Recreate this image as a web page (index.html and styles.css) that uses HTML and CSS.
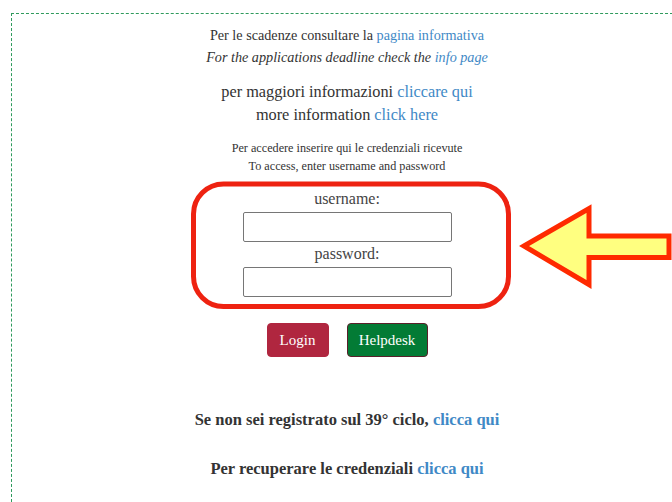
FILE: index.html
```html
<!DOCTYPE html>
<html lang="it">
<head>
<meta charset="utf-8">
<title>Accesso</title>
<link rel="stylesheet" href="styles.css">
</head>
<body>
<div class="frame">
  <p class="notice">Per le scadenze consultare la <a href="#">pagina informativa</a><br>
    <em>For the applications deadline check the <a href="#">info page</a></em></p>
  <p class="more">per maggiori informazioni <a href="#">cliccare qui</a><br>
    more information <a href="#">click here</a></p>
  <p class="access">Per accedere inserire qui le credenziali ricevute<br>
    To access, enter username and password</p>
  <form class="login" onsubmit="return false">
    <label class="field-label" for="user">username:</label>
    <input class="field" id="user" type="text">
    <label class="field-label" for="pass">password:</label>
    <input class="field" id="pass" type="password">
    <div class="actions">
      <button class="btn btn-login" type="submit">Login</button>
      <button class="btn btn-help" type="button">Helpdesk</button>
    </div>
  </form>
  <p class="strong-line first">Se non sei registrato sul 39° ciclo, <a href="#">clicca qui</a></p>
  <p class="strong-line">Per recuperare le credenziali <a href="#">clicca qui</a></p>
</div>

<!-- highlight ring and pointer drawn over the login fields -->
<svg class="markup" width="672" height="502" viewBox="0 0 672 502" aria-hidden="true">
  <rect x="193.5" y="184" width="315" height="122.5" rx="30" ry="30" fill="none" stroke="#ee2211" stroke-width="5"/>
  <polygon points="524,246 589,208.5 589,236 669,236 669,257.5 589,257.5 589,284.5" fill="#ffff80" stroke="#ff2a00" stroke-width="5" stroke-linejoin="miter"/>
</svg>
</body>
</html>
```

FILE: styles.css
```css
html, body {
  margin: 0;
  padding: 0;
  overflow: hidden;
  background: #ffffff;
}

body {
  font-family: "Liberation Serif", "Times New Roman", serif;
  color: #333333;
  position: relative;
  width: 672px;
  height: 502px;
}

a {
  color: #3f89c6;
  text-decoration: none;
}

.frame {
  margin: 13px 0 0 11px;
  width: 672px;
  height: 489px;
  border: 1px dashed #2f9a5c;
  border-bottom: 0;
  padding-top: 10px;
  text-align: center;
  box-sizing: border-box;
}

.frame p {
  margin: 0;
}

.notice {
  font-size: 14.2px;
  line-height: 22px;
}

.more {
  margin-top: 12px !important;
  font-size: 16.3px;
  line-height: 23px;
}

.access {
  margin-top: 13px !important;
  font-size: 12.2px;
  line-height: 18px;
}

.login {
  margin-top: 14px;
  display: flex;
  flex-direction: column;
  align-items: center;
}

.field-label {
  font-size: 16px;
  line-height: 20px;
  color: #444444;
}

.field {
  margin: 3px 0 2px;
  width: 209px;
  height: 30px;
  box-sizing: border-box;
  border: 1px solid #767676;
  border-radius: 2px;
  padding: 2px 4px;
  font: inherit;
}

.actions {
  margin-top: 24px;
  display: flex;
  gap: 18px;
}

.btn {
  height: 34px;
  border-radius: 4px;
  font-family: "Liberation Serif", "Times New Roman", serif;
  font-size: 15px;
  color: #ffffff;
  cursor: pointer;
}

.btn-login {
  width: 62px;
  background: #b0263f;
  border: 1px solid #b0263f;
}

.btn-help {
  width: 81px;
  background: #037b35;
  border: 1px solid #5a1f2a;
}

.strong-line {
  font-size: 16.5px;
  font-weight: bold;
  line-height: 20px;
  margin-top: 29px !important;
}

.strong-line.first {
  margin-top: 53px !important;
}

.markup {
  position: absolute;
  left: 0;
  top: 0;
  pointer-events: none;
}
```
